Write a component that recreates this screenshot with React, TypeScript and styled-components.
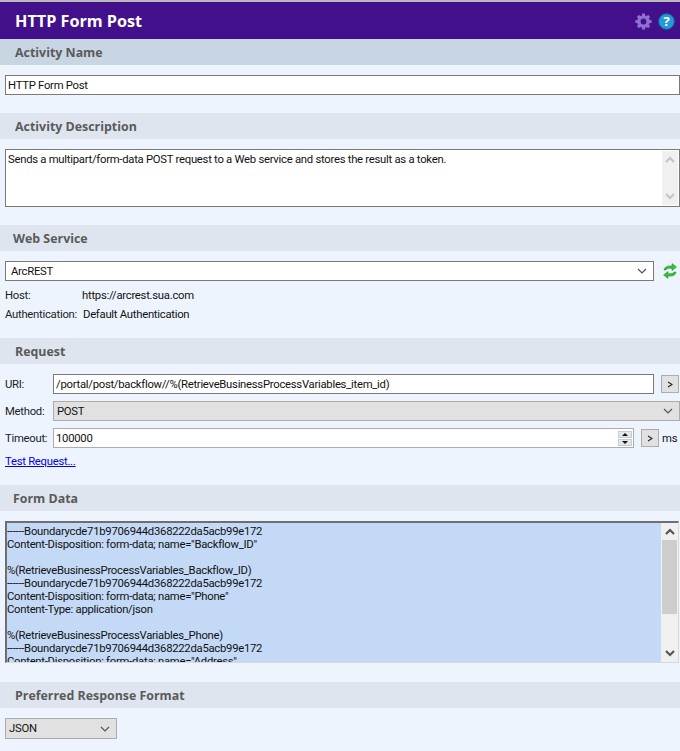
import React from "react";
import styled, { createGlobalStyle } from "styled-components";

const Global = createGlobalStyle`
  html, body { margin: 0; padding: 0; background: #edf4fe; }
  body { font-family: Roboto, "Liberation Sans", sans-serif; font-size: 11.3px; letter-spacing: -0.27px; color: #111; }
`;
const Page = styled.div`
  width: 680px; height: 751px; overflow: hidden; background: #edf4fe;
  border-top: 2px solid #b9b9b9; box-sizing: border-box;
`;
const TitleBar = styled.header`
  height: 37px; background: #43108c; display: flex; align-items: center;
  justify-content: space-between; padding: 0 5px 0 15px;
`;
const Title = styled.h1`
  margin: 0; color: #fff; font: 700 16.2px "Open Sans", sans-serif; letter-spacing: 0;
`;
const TitleIcons = styled.div`display: flex; align-items: center; gap: 6px; margin-top: 2px;`;
const SectionHead = styled.h2<{ $first?: boolean; $indent?: number }>`
  margin: 0; height: 26px; padding-left: ${p => p.$indent ?? 15}px;
  background: ${p => (p.$first ? "#c8d6e3" : "#dee5ee")};
  color: #5a5a5a; font: 700 12.4px/27px "Open Sans", sans-serif; letter-spacing: 0;
`;
const Body = styled.section<{ $top?: number; $bottom?: number; $gap?: number; $right?: number }>`
  padding: ${p => p.$top ?? 10}px ${p => p.$right ?? 0}px ${p => p.$bottom ?? 18}px 5px;
  display: flex; flex-direction: column; gap: ${p => p.$gap ?? 0}px;
`;
const Field = styled.div<{ $w?: string; $h?: number }>`
  box-sizing: border-box; width: ${p => p.$w ?? "100%"}; height: ${p => p.$h ?? 20}px;
  flex: none;
  background: #fff; border: 1px solid #7a7a7a; display: flex; align-items: center;
  padding-left: 2px; padding-top: 1px; white-space: nowrap; overflow: hidden; line-height: 1;
`;
const Row = styled.div`display: flex; align-items: center;`;
const Label = styled.span<{ $w: number }>`width: ${p => p.$w}px; flex: none; color: #222; white-space: nowrap; padding-top: 1px;`;
const InfoValue = styled.span`padding-top: 1px;`;
const InfoRow = styled(Row)`height: 19px;`;
const TextBox = styled.div`
  box-sizing: border-box; height: 58px; background: #fff; border: 1px solid #7a7a7a;
  display: flex; justify-content: space-between; padding: 1px 1px 1px 2px;
`;
const DescText = styled.span`padding-top: 2px;`;
const MiniScroll = styled.div`
  width: 16px; background: #f0f0f0; display: flex; flex-direction: column;
  justify-content: space-between; align-items: center; padding: 5px 0;
`;
const ChoiceText = styled.span<{ $pad: number }>`padding-left: ${p => p.$pad}px;`;
const Select = styled(Field)`justify-content: space-between; padding-right: 6px;`;
const GreySelect = styled(Select)`
  background: #e1e1e1; border-color: #adadad;
`;
const SmallBtn = styled.div`
  box-sizing: border-box; width: 18px; height: 18px; background: #e1e1e1; border: 1px solid #adadad;
  display: flex; align-items: center; justify-content: center; flex: none;
`;
const Spinner = styled.div`
  width: 14px; height: 15px; display: flex; flex-direction: column; gap: 1px;
  margin-left: auto; margin-right: 1px; flex: none;
`;
const SpinCell = styled.div`
  flex: 1; background: #e4e7ea; border: 1px solid #c4ccd4; display: flex; align-items: center; justify-content: center;
`;
const Tri = styled.i<{ $down?: boolean }>`
  width: 0; height: 0; border-left: 3px solid transparent; border-right: 3px solid transparent;
  ${p => (p.$down ? "border-top: 3px solid #111;" : "border-bottom: 3px solid #111;")}
`;
const TestLink = styled.a`color: #0000ee; text-decoration: underline; height: 16px; line-height: 16px; margin-top: -1px;`;
const FormBox = styled.div`
  box-sizing: border-box; height: 142px; display: flex; background: #c3d9f6;
  border: 1px solid #d9d9d9; border-top: 2px solid #6f6f6f; border-left: 2px solid #6f6f6f; overflow: hidden;
`;
const FormText = styled.pre`
  flex: 1; margin: 0; padding: 2px 0 0 0; font: inherit; letter-spacing: inherit; line-height: 13px; overflow: hidden; color: #111; height: 139px;
`;
const Scrollbar = styled.div`
  width: 17px; background: #f0f0f0; display: flex; flex-direction: column; align-items: center; margin-left: 1px; flex: none;
`;
const ArrowCell = styled.div`height: 17px; display: flex; align-items: center; justify-content: center; flex: none;`;
const Thumb = styled.div`width: 15px; height: 74px; background: #cdcdcd; flex: none;`;
const Track = styled.div`flex: 1;`;
const Ms = styled.span`margin-left: 3px;`;
const RefreshSlot = styled.div`margin-left: 9px; display: flex;`;
const InfoTop = styled.div`margin-top: 4px; display: flex; flex-direction: column;`;
const GapBtn = styled.div`margin-left: 7px; display: flex;`;
const TimeoutField = styled(Field)`border-color: #adadad;`;

const Chevron = ({ up, color = "#555", bold }: { up?: boolean; color?: string; bold?: boolean }) => (
  <svg width="10" height="7" viewBox="0 0 10 7" fill="none">
    <path d={up ? "M1 6L5 2L9 6" : "M1 1L5 5L9 1"} stroke={color} strokeWidth={bold ? 2.2 : 1.2} />
  </svg>
);
const Gear = () => (
  <svg width="17" height="17" viewBox="0 0 17 17">
    <circle cx="8.500" cy="8.500" r="4.600" fill="none" stroke="#8f6fd0" strokeWidth="3.400" />
    {[0, 45, 90, 135, 180, 225, 270, 315].map(a => (
      <rect key={a} x="7" y="0.500" width="3" height="3.500" fill="#8f6fd0" transform={`rotate(${a} 8.500 8.500)`} />
    ))}
  </svg>
);
const Help = () => (
  <svg width="17" height="17" viewBox="0 0 17 17">
    <circle cx="8.500" cy="8.500" r="7.800" fill="#259ad6" stroke="#17689f" strokeWidth="1" />
    <text x="8.500" y="13" textAnchor="middle" fill="#fff" fontSize="13" fontWeight="700" fontFamily="Open Sans, sans-serif">?</text>
  </svg>
);
const Refresh = () => (
  <svg width="14" height="16" viewBox="0 0 14 16">
    <path fill="#34c234" stroke="#1b8f1b" strokeWidth=".5" d="M1 7C1.500 3.500 4.500 2.500 9 3V.5L13.500 4 9 7.500V5.500C6 5 3.500 5.300 3 7z" />
    <path fill="#34c234" stroke="#1b8f1b" strokeWidth=".5" d="M13 9C12.500 12.500 9.500 13.500 5 13v2.500L.5 12 5 8.500v2c3 .5 5.500.2 6-1.500z" />
  </svg>
);
const More = () => (
  <svg width="6" height="7" viewBox="0 0 6 7" fill="none">
    <path d="M1 1l4 2.500L1 6" stroke="#222" strokeWidth="1.100" />
  </svg>
);

const formText = `------Boundarycde71b9706944d368222da5acb99e172
Content-Disposition: form-data; name="Backflow_ID"

%(RetrieveBusinessProcessVariables_Backflow_ID)
------Boundarycde71b9706944d368222da5acb99e172
Content-Disposition: form-data; name="Phone"
Content-Type: application/json

%(RetrieveBusinessProcessVariables_Phone)
------Boundarycde71b9706944d368222da5acb99e172
Content-Disposition: form-data; name="Address"`;

export default function App() {
  return (
    <Page>
      <Global />
      <TitleBar>
        <Title>HTTP Form Post</Title>
        <TitleIcons><Gear /><Help /></TitleIcons>
      </TitleBar>

      <SectionHead $first>Activity Name</SectionHead>
      <Body $bottom={18}><Field>HTTP Form Post</Field></Body>

      <SectionHead>Activity Description</SectionHead>
      <Body $bottom={18}>
        <TextBox>
          <DescText>Sends a multipart/form-data POST request to a Web service and stores the result as a token.</DescText>
          <MiniScroll><Chevron up color="#c4c4c4" bold /><Chevron color="#c4c4c4" bold /></MiniScroll>
        </TextBox>
      </Body>

      <SectionHead $indent={13}>Web Service</SectionHead>
      <Body $bottom={15}>
        <Row>
          <Select $w="649px"><ChoiceText $pad={3}>ArcREST</ChoiceText><Chevron /></Select>
          <RefreshSlot><Refresh /></RefreshSlot>
        </Row>
        <InfoTop>
          <InfoRow><Label $w={77}>Host:</Label><InfoValue>https://arcrest.sua.com</InfoValue></InfoRow>
          <InfoRow><Label $w={78}>Authentication:</Label><InfoValue>Default Authentication</InfoValue></InfoRow>
        </InfoTop>
      </Body>

      <SectionHead>Request</SectionHead>
      <Body $gap={7} $bottom={15}>
        <Row>
          <Label $w={48}>URI:</Label>
          <Field $w="601px">/portal/post/backflow//%(RetrieveBusinessProcessVariables_item_id)</Field>
          <GapBtn><SmallBtn><More /></SmallBtn></GapBtn>
        </Row>
        <Row>
          <Label $w={48}>Method:</Label>
          <GreySelect $w="627px"><ChoiceText $pad={1}>POST</ChoiceText><Chevron /></GreySelect>
        </Row>
        <Row>
          <Label $w={48}>Timeout:</Label>
          <TimeoutField $w="581px">
            100000
            <Spinner>
              <SpinCell><Tri /></SpinCell>
              <SpinCell><Tri $down /></SpinCell>
            </Spinner>
          </TimeoutField>
          <GapBtn><SmallBtn><More /></SmallBtn></GapBtn>
          <Ms>ms</Ms>
        </Row>
        <TestLink href="#">Test Request...</TestLink>
      </Body>

      <SectionHead $indent={13}>Form Data</SectionHead>
      <Body $right={1} $top={10} $bottom={19}>
        <FormBox>
          <FormText>{formText}</FormText>
          <Scrollbar>
            <ArrowCell><Chevron up bold /></ArrowCell>
            <Thumb />
            <Track />
            <ArrowCell><Chevron bold /></ArrowCell>
          </Scrollbar>
        </FormBox>
      </Body>

      <SectionHead>Preferred Response Format</SectionHead>
      <Body>
        <GreySelect $w="112px" $h={21}><ChoiceText $pad={1}>JSON</ChoiceText><Chevron /></GreySelect>
      </Body>
    </Page>
  );
}
